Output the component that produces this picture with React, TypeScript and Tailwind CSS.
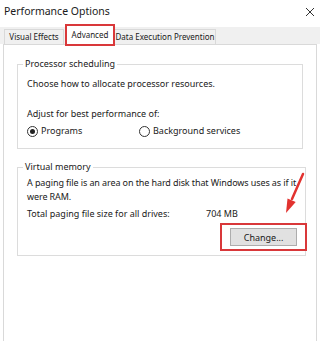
import React from 'react'

const Radio = ({ checked, label }: { checked?: boolean; label: string }) => (
  <label className="flex items-center gap-[3px]">
    <span className="flex h-[11px] w-[11px] items-center justify-center rounded-full border border-[#333] bg-white">
      {checked && <span className="h-[5px] w-[5px] rounded-full bg-[#222]" />}
    </span>
    <span>{label}</span>
  </label>
)

const App = () => {
  return (
    <div
      className="relative flex h-[341px] w-[320px] flex-col overflow-hidden bg-white text-[9px] leading-[14px] text-[#1a1a1a]"
      style={{ fontFamily: '"Noto Sans", sans-serif' }}
    >
      {/* title bar */}
      <div className="flex h-[27px] items-start justify-between pl-[4px] pr-[4px] pt-[4px]">
        <span className="text-[10.5px]">Performance Options</span>
        <svg width="10" height="10" viewBox="0 0 10 10" className="mr-[1px] mt-[3px]">
          <path d="M1 1L9 9M9 1L1 9" stroke="#333" strokeWidth="1" />
        </svg>
      </div>

      {/* tabs */}
      <div className="flex h-[17px] items-end bg-[#f0f0f0] pl-[4px] text-[8px]">
        <div className="flex h-[15px] w-[60px] items-center justify-center border border-b-0 border-[#d9d9d9]">
          Visual Effects
        </div>
        <div className="relative z-10 -mb-[2px] ml-[1px] flex h-[22px] w-[50px] items-center justify-center border-2 border-[#d9383a] bg-white">
          Advanced
        </div>
        <div className="flex h-[15px] w-[101px] items-center justify-center border border-b-0 border-l-0 border-[#d9d9d9]">
          Data Execution Prevention
        </div>
      </div>

      {/* panel */}
      <div className="mx-[3px] flex flex-1 flex-col gap-[11px] border-x border-t border-[#d9d9d9] bg-white px-[13px] pt-[12px]">
        <fieldset className="border border-[#dcdcdc] px-[9px] pb-[10px] pt-[6px]">
          <legend className="-ml-[4px] px-[2px]">Processor scheduling</legend>
          <p>Choose how to allocate processor resources.</p>
          <p className="mt-[16px]">Adjust for best performance of:</p>
          <div className="mt-[3px] flex">
            <div className="w-[112px]">
              <Radio checked label="Programs" />
            </div>
            <Radio label="Background services" />
          </div>
        </fieldset>

        <fieldset className="border border-[#dcdcdc] px-[9px] pb-[4px] pt-[2px]">
          <legend className="-ml-[4px] px-[2px]">Virtual memory</legend>
          <p className="whitespace-nowrap tracking-[-0.1px]">
            A paging file is an area on the hard disk that Windows uses as if it
            <br />
            were RAM.
          </p>
          <div className="mt-[3px] flex">
            <span className="w-[179px]">Total paging file size for all drives:</span>
            <span>704 MB</span>
          </div>
          <div className="-mr-[11px] mt-[2px] flex justify-end">
            <div className="flex h-[28px] w-[87px] items-center justify-center border-2 border-[#d9383a]">
              <button className="h-[18px] w-[67px] border border-[#adadad] bg-[#e1e1e1] text-[9px] leading-none">
                Change...
              </button>
            </div>
          </div>
        </fieldset>
      </div>

      {/* red arrow */}
      <svg className="absolute left-0 top-0" width="320" height="341" viewBox="0 0 320 341">
        <path d="M303 174L292 199" stroke="#e2322f" strokeWidth="2.5" strokeLinecap="round" />
        <path d="M286 213L287.5 198.4L295.7 202Z" fill="#e2322f" />
      </svg>
    </div>
  )
}

export default App
